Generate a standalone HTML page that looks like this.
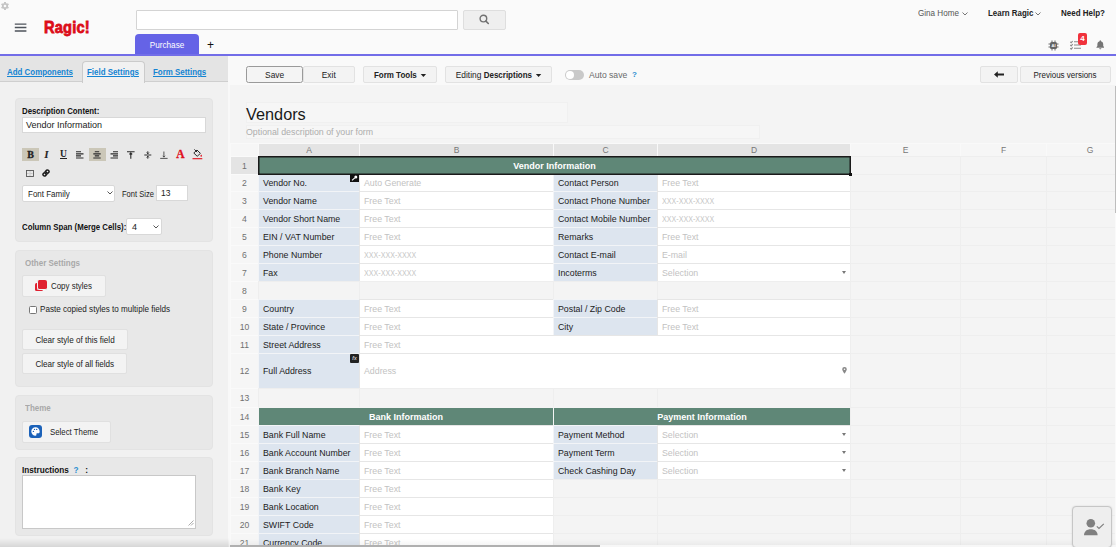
<!DOCTYPE html>
<html><head><meta charset="utf-8"><title>Vendors - Ragic</title>
<style>
*{box-sizing:border-box;margin:0;padding:0}
html,body{width:1116px;height:547px;overflow:hidden;background:#f4f4f4;font-family:"Liberation Sans",sans-serif;font-size:9px;color:#222}
.abs{position:absolute}
#top{position:absolute;left:0;top:0;width:1116px;height:54px;background:#fafafa}
#pline{z-index:5;position:absolute;left:0;top:54px;width:1116px;height:2px;background:#726de8}
#toolbar{position:absolute;left:228px;top:55px;width:888px;height:30px;background:#f9f9f9}
#left{position:absolute;left:0;top:55px;width:229px;height:492px;background:#f1f1f1}
#ltabs{position:absolute;left:0;top:0;width:229px;height:27px;background:#e4e4e4;border-bottom:1px solid #cfcfcf}
.btn b,.btn.bb{font-size:8.900px;font-weight:bold}
.btn{position:absolute;height:17px;top:66px;background:#f3f3f3;border:1px solid #e2e2e2;border-radius:2px;font-size:9.300px;line-height:16px;text-align:center;color:#222;white-space:nowrap}
.card{position:absolute;left:15px;width:198px;background:#e8e8e8;border:1px solid #e3e3e3;border-radius:4px}
.lt{transform:scaleX(.9);transform-origin:0 0;font-size:8.800px;line-height:11px;font-weight:bold;color:#1584d2;text-decoration:underline;white-space:nowrap}
.b{transform:scaleX(.9);transform-origin:0 0;font-weight:bold;font-size:8.700px;line-height:11px;white-space:nowrap;color:#111}
.g{transform:scaleX(.9);transform-origin:0 0;font-weight:bold;font-size:8.900px;line-height:11px;white-space:nowrap;color:#a8a8a8}
.inp{background:#fff;border:1px solid #d8d8d8;font-size:9px;color:#222;white-space:nowrap}
.lbtn{background:#f3f3f3;border:1px solid #e0e0e0;border-radius:2px;font-size:9px;white-space:nowrap}
.ser{font-family:"Liberation Serif",serif;font-size:10px;line-height:12px;color:#222}
.c{position:absolute;border-top:1px solid #ebebeb;border-left:1px solid #ebebeb;font-size:8.800px;white-space:nowrap;overflow:hidden}
.ch{background:#f6f6f6;color:#777;text-align:center;font-size:8.500px;border-color:#f9f9f9}
.ch.sel{background:#e4e4e4}
.rn{background:#f6f6f6;color:#707070;text-align:center;font-size:8.600px;border-color:#fafafa}
.rn.sel{background:#e4e4e4}
.e{background:#f4f4f4;border-color:#eeeeee}
.lb{background:#dde5ef;color:#1c1c1c;padding-left:4px;border-color:#f2f4f7}
.v{background:#fff;color:#c2c2c2;padding-left:4px;border-color:#e6e6e6}
.v.x{color:#c8c8c8}
.xs{display:inline-block;transform:scaleX(.81);transform-origin:0 50%}
.hd{background:#5f8777;color:#fff;font-weight:bold;font-size:9px;text-align:center;border-color:#f4f4f4}
.caret{position:absolute;width:0;height:0;border-left:2.500px solid transparent;border-right:2.500px solid transparent;border-top:3px solid #777}
.dn{display:inline-block;width:0;height:0;border-left:3px solid transparent;border-right:3px solid transparent;border-top:3px solid #222;vertical-align:middle;margin-left:2px}
.sx{transform:scaleX(.9);transform-origin:0 0}
.sc{display:inline-block;transform:scaleX(.9);transform-origin:50% 50%}
</style></head><body>
<div id="top">
<svg class="abs" style="left:0px;top:1px" width="10" height="10" viewBox="0 0 10 10"><circle cx="5" cy="5" r="2.200" fill="none" stroke="#c4c4c4" stroke-width="1.700"/><path stroke="#c4c4c4" stroke-width="1.900" d="M5.00 7.60L5.00 9.00M2.75 6.30L1.54 7.00M2.75 3.70L1.54 3.00M5.00 2.40L5.00 1.00M7.25 3.70L8.46 3.00M7.25 6.30L8.46 7.00"/></svg>
<svg class="abs" style="left:14px;top:22px" width="14" height="11" viewBox="0 0 14 11"><path stroke="#4e535b" stroke-width="1.300" d="M.8 2.100h11.600M.8 5.500h11.600M.8 9h11.600"/></svg>
<div class="abs" id="logo" style="left:44px;top:18px;font-size:16.300px;line-height:18px;font-weight:bold;color:#dc0c18;transform:scaleX(.9);transform-origin:0 0;-webkit-text-stroke:.8px #dc0c18;white-space:nowrap;letter-spacing:.2px">Ragic!</div>
<div class="abs" style="left:136px;top:10px;width:322px;height:20px;background:#fff;border:1px solid #d4d4d4;border-radius:1px"></div>
<div class="abs" style="left:463px;top:10px;width:43px;height:20px;background:#efefef;border:1px solid #dedede;border-radius:2px"></div>
<svg class="abs" style="left:479px;top:14px" width="11" height="11" viewBox="0 0 11 11"><circle cx="4.400" cy="4.600" r="3.300" fill="none" stroke="#727272" stroke-width="1.400"/><path d="M6.900 7.100L9.300 9.500" stroke="#727272" stroke-width="1.600" stroke-linecap="round"/></svg>
<div class="abs" style="left:135px;top:34px;width:64px;height:21px;background:#6563e6;border-radius:4px 4px 0 0;color:#fff;font-size:8.2px;line-height:23px;text-align:center">Purchase</div>
<div class="abs" style="left:207px;top:38px;font-size:12px;line-height:14px;color:#111">+</div>
<div class="abs" style="left:918px;top:8px;transform:scaleX(.9);transform-origin:0 0;font-size:9px;line-height:11px;color:#555;white-space:nowrap">Gina Home</div>
<svg class="abs" style="left:962px;top:12px" width="6" height="4" viewBox="0 0 6 4"><path d="M.5 .5L3 3L5.5 .5" fill="none" stroke="#666" stroke-width=".9"/></svg>
<div class="abs" style="left:988px;top:8px;transform:scaleX(.9);transform-origin:0 0;font-size:8.800px;line-height:11px;color:#222;font-weight:bold;white-space:nowrap">Learn Ragic</div>
<svg class="abs" style="left:1035px;top:12px" width="6" height="4" viewBox="0 0 6 4"><path d="M.5 .5L3 3L5.5 .5" fill="none" stroke="#666" stroke-width=".9"/></svg>
<div class="abs" style="left:1061px;top:8px;transform:scaleX(.9);transform-origin:0 0;font-size:8.900px;line-height:11px;color:#222;font-weight:bold;white-space:nowrap">Need Help?</div>
<svg class="abs" style="left:1048px;top:40px" width="11" height="11" viewBox="0 0 22 22"><rect x="4" y="4" width="14" height="14" rx="3" fill="#666"/><path stroke="#666" stroke-width="2" d="M8 1v3M14 1v3M8 18v3M14 18v3M1 8h3M1 14h3M18 8h3M18 14h3"/><text x="11" y="14.5" font-size="8" font-family="Liberation Sans, sans-serif" font-weight="bold" fill="#fafafa" text-anchor="middle">AI</text></svg>
<svg class="abs" style="left:1070px;top:40px" width="11" height="10" viewBox="0 0 11 10"><path stroke="#888" stroke-width="1.1" fill="none" d="M4 1.8h7M4 5h7M4 8.2h7M.3 1.8l.9.9l1.5-1.7M.3 5l.9.9l1.5-1.7M.3 8.2l.9.9l1.5-1.7"/></svg>
<div class="abs" style="left:1078px;top:33px;width:9px;height:12px;background:#f0323c;border-radius:2px;color:#fff;font-size:8px;line-height:12px;text-align:center;font-weight:bold">4</div>
<svg class="abs" style="left:1095.700px;top:40.400px" width="8.600" height="9.500" viewBox="0 0 10 11"><path fill="#757575" d="M5 0.3c.5 0 .8.3.8.8v.4c1.6.4 2.6 1.700 2.600 3.400v2.100l1.100 1.300v.6h-9v-.6l1.100-1.300v-2.100c0-1.700 1-3 2.600-3.400v-.4c0-.5.3-.8.800-.8zM3.800 9.500h2.400c0 .7-.5 1.200-1.200 1.200s-1.200-.5-1.200-1.200z"/></svg>
</div>
<div id="pline"></div>
<div id="left">
<div id="ltabs"></div>
<div class="abs lt" style="left:7px;top:12px">Add Components</div>
<div class="abs" style="left:82px;top:6px;width:63px;height:22px;background:#f1f1f1;border:1px solid #cbcbcb;border-bottom:none;border-radius:4px 4px 0 0"></div>
<div class="abs lt" style="left:87px;top:12px">Field Settings</div>
<div class="abs lt" style="left:153px;top:12px">Form Settings</div>

<div class="card" style="top:43px;height:144px"></div>
<div class="abs b" style="left:22px;top:51px">Description Content:</div>
<div class="abs inp" style="left:22px;top:62px;width:184px;height:16px;padding-left:3px;line-height:15px">Vendor Information</div>
<div class="abs" style="left:22px;top:93px;width:17px;height:13px;background:#cbc7b8"></div>
<div class="abs" style="left:89px;top:93px;width:17px;height:13px;background:#cbc7b8"></div>
<div id="icons">
<div class="abs ser" style="left:24px;top:94px;width:13px;text-align:center;font-weight:bold;-webkit-text-stroke:.3px #222">B</div>
<div class="abs ser" style="left:40px;top:94px;width:13px;text-align:center;font-weight:bold;font-style:italic;-webkit-text-stroke:.2px #222">I</div>
<div class="abs ser" style="left:57px;top:93px;width:13px;text-align:center;font-size:9.500px;font-weight:bold">U</div>
<div class="abs" style="left:60px;top:102.500px;width:7px;height:1px;background:#222"></div>
<svg class="abs" style="left:76px;top:96px" width="8" height="8" viewBox="0 0 8 8"><path stroke="#2a2a2a" stroke-width="1.150" d="M0 .7h5M0 2.800h7.500M0 4.900h5M0 7h7.500"/></svg>
<svg class="abs" style="left:93px;top:96px" width="8" height="8" viewBox="0 0 8 8"><path stroke="#2a2a2a" stroke-width="1.150" d="M1.800 .7h4.400M.3 2.800h7.400M1.800 4.900h4.400M.3 7h7.400"/></svg>
<svg class="abs" style="left:110px;top:96px" width="8" height="8" viewBox="0 0 8 8"><path stroke="#2a2a2a" stroke-width="1.150" d="M3 .7h5M.5 2.800h7.500M3 4.900h5M.5 7h7.500"/></svg>
<svg class="abs" style="left:127px;top:96px" width="8" height="8" viewBox="0 0 8 8"><path stroke="#2a2a2a" stroke-width="1.100" fill="none" d="M0 .7h7.600M3.800 1.500v6.300M2.400 3.400L3.800 2l1.400 1.400"/></svg>
<svg class="abs" style="left:144px;top:96px" width="8" height="8" viewBox="0 0 8 8"><path stroke="#2e2e2e" stroke-width="1" fill="none" d="M.3 4h7M3.800 .3v2.600M3.800 5.100v2.600M2.700 1.600L3.800 2.800l1.100-1.200M2.700 6.400L3.800 5.200l1.100 1.200"/></svg>
<svg class="abs" style="left:160px;top:96px" width="8" height="8" viewBox="0 0 8 8"><path stroke="#444" stroke-width=".9" fill="none" d="M.2 7.400h7.400M3.900 .5v5.800M2.700 4.800L3.900 6l1.200-1.200"/></svg>
<div class="abs" style="left:174px;top:93px;width:13px;text-align:center;font-weight:bold;font-size:11.500px;line-height:12px;color:#e0101c;font-family:'Liberation Serif',serif;-webkit-text-stroke:.3px #e0101c">A</div>
<svg class="abs" style="left:192px;top:94px" width="11" height="11" viewBox="0 0 11 11"><path fill="none" stroke="#2a2a2a" stroke-width="1" d="M1.800 4L5 1l3.400 3.400l-3.200 2.900z"/><path stroke="#2a2a2a" stroke-width="1" d="M2.400 .4l2.800 2.800"/><path fill="#e0101c" d="M9.200 5.500c.5.700.8 1.100.8 1.500a.8.800 0 0 1-1.600 0c0-.4.300-.8.800-1.500z"/><path stroke="#e0101c" stroke-width="1.100" d="M.5 9.700h9.800"/></svg>
<svg class="abs" style="left:26px;top:115px" width="8" height="7" viewBox="0 0 8 7"><rect x=".5" y=".5" width="7" height="6" fill="none" stroke="#555" stroke-width=".9"/><path stroke="#999" stroke-width=".5" stroke-dasharray=".8 .6" d="M4 1v5M1 3.500h6"/></svg>
<svg class="abs" style="left:42px;top:114px" width="8" height="8" viewBox="0 0 8 8"><path fill="none" stroke="#1a1a1a" stroke-width="1.500" stroke-linecap="round" d="M3.400 4.600a1.600 1.600 0 0 1 0-2.200l1.200-1.200a1.600 1.600 0 0 1 2.200 2.200l-.6.600M4.600 3.400a1.600 1.600 0 0 1 0 2.200l-1.200 1.200a1.600 1.600 0 0 1-2.200-2.200l.6-.6"/></svg>
</div>
<div class="abs inp" style="left:22px;top:130px;width:93px;height:17px;padding-left:5px;line-height:16px;border-radius:2px;font-size:8.900px"><span class="sc" style="transform-origin:0 50%">Font Family</span></div>
<svg class="abs" style="left:107px;top:136px" width="6" height="4" viewBox="0 0 6 4"><path d="M.5 .5L3 3L5.500 .5" fill="none" stroke="#444" stroke-width=".9"/></svg>
<div class="abs sx" style="left:122px;top:134px;line-height:11px;font-size:8.400px;white-space:nowrap">Font Size</div>
<div class="abs inp" style="left:156px;top:130px;width:32px;height:16px;padding-left:4px;line-height:15px;font-size:8.500px">13</div>
<div class="abs b" style="left:22px;top:167px">Column Span (Merge Cells):</div>
<div class="abs inp" style="left:126px;top:163px;width:36px;height:17px;padding-left:5px;line-height:16px;border-radius:2px">4</div>
<svg class="abs" style="left:153px;top:170px" width="6" height="4" viewBox="0 0 6 4"><path d="M.5 .5L3 3L5.500 .5" fill="none" stroke="#444" stroke-width=".9"/></svg>

<div class="card" style="top:195px;height:137px"></div>
<div class="abs g" style="left:25px;top:203px">Other Settings</div>
<div class="abs lbtn" style="left:22px;top:220px;width:84px;height:22px"></div>
<div class="abs" style="left:35px;top:228px;width:8px;height:8px;background:#e02030;border-radius:1.500px"></div>
<div class="abs" style="left:37px;top:225px;width:10px;height:10px;background:#e02030;border-radius:2px;border-left:1px solid #f3f3f3;border-bottom:1px solid #f3f3f3"></div>
<div class="abs sx" style="left:51px;top:226px;line-height:11px;font-size:8.800px;white-space:nowrap">Copy styles</div>
<div class="abs" style="left:29px;top:251px;width:8px;height:8px;background:#fff;border:1px solid #767676;border-radius:1.500px"></div>
<div class="abs sx" style="left:40px;top:249px;line-height:11px;white-space:nowrap;font-size:9px">Paste copied styles to multiple fields</div>
<div class="abs lbtn" style="left:22px;top:274px;width:106px;height:21px;line-height:20px;text-align:center"><span class="sc">Clear style of this field</span></div>
<div class="abs lbtn" style="left:22px;top:298px;width:105px;height:21px;line-height:20px;text-align:center"><span class="sc">Clear style of all fields</span></div>

<div class="card" style="top:340px;height:55px"></div>
<div class="abs g" style="left:25px;top:348px">Theme</div>
<div class="abs lbtn" style="left:22px;top:366px;width:89px;height:22px"></div>
<div class="abs" style="left:29px;top:370px;width:13px;height:13px;background:#1c62b9;border-radius:3px"></div>
<svg class="abs" style="left:31px;top:372px" width="9" height="9" viewBox="0 0 9 9"><path fill="#fff" d="M4.500 .3a4.200 4.200 0 1 0 0 8.400c.8 0 1.100-.5 .9-1.100c-.3-.8.2-1.400 1-1.400h1c.8 0 1.300-.6 1.300-1.500c0-2.500-1.900-4.400-4.200-4.400z"/><circle cx="2.400" cy="4.400" r=".7" fill="#1c62b9"/><circle cx="3.500" cy="2.400" r=".7" fill="#1c62b9"/><circle cx="5.700" cy="2.400" r=".7" fill="#1c62b9"/></svg>
<div class="abs sx" style="left:50px;top:372px;line-height:11px;font-size:8.700px;white-space:nowrap">Select Theme</div>

<div class="card" style="top:402px;height:79px"></div>
<div class="abs b" style="left:22px;top:410px;font-size:9.100px">Instructions&nbsp; <span style="color:#2b8fd0;font-weight:bold">?</span>&nbsp;&nbsp; :</div>
<div class="abs" style="left:22px;top:420px;width:174px;height:54px;background:#fff;border:1px solid #c8c8c8"></div>
<svg class="abs" style="left:188px;top:465px" width="6" height="6" viewBox="0 0 6 6"><path d="M5.500 .5L.5 5.500M5.500 3L3 5.500" stroke="#888" stroke-width=".7"/></svg>
</div>
<div id="toolbar"></div>
<div class="btn" style="left:246px;width:57px;background:#f4f4f4;border-color:#9a9a9a;border-radius:2.500px"><span class="sc">Save</span></div>
<div class="btn" style="left:303px;width:52px"><span class="sc">Exit</span></div>
<div class="btn bb" style="left:363px;width:74px"><span class="sc">Form Tools <span class="dn"></span></span></div>
<div class="btn" style="left:445px;width:107px"><span class="sc">Editing <b>Descriptions</b> <span class="dn"></span></span></div>
<div class="abs" style="left:565px;top:70px;width:19px;height:10px;border-radius:5px;background:#c9c9c9"></div>
<div class="abs" style="left:566px;top:71px;width:8px;height:8px;border-radius:4px;background:#fff"></div>
<div class="abs" style="left:589px;top:69px;font-size:8.600px;line-height:12px;color:#6a6a6a;white-space:nowrap">Auto save</div>
<div class="abs" style="left:632px;top:69px;font-size:8px;line-height:12px;color:#2b8fd0;font-weight:bold">?</div>
<div class="btn" style="left:980px;width:38px"></div>
<svg class="abs" style="left:994px;top:71px" width="10" height="7" viewBox="0 0 10 7"><path fill="#222" d="M0 3.500L3.800 .3v2.200h6.200v2h-6.200v2.200z"/></svg>
<div class="btn" style="left:1020px;width:91px;font-size:8.900px"><span class="sc">Previous versions</span></div>
<div id="grid">
<div class="abs" style="left:228px;top:85px;width:888px;height:462px;background:#f4f4f4"></div>
<div class="abs" style="left:228px;top:85px;width:2px;height:462px;background:#f8f8f8"></div>
<div class="abs" style="left:246px;top:102px;width:322px;height:21px;border:1px solid #f0f0f0;background:#f6f6f6"></div>
<div class="abs" style="left:246px;top:125px;width:514px;height:14px;border:1px solid #f0f0f0;background:#f6f6f6"></div>
<div class="abs" style="left:246px;top:104px;font-size:16.300px;line-height:20px;color:#1a1a1a;white-space:nowrap">Vendors</div>
<div class="abs" style="left:246px;top:126px;font-size:8.800px;line-height:12px;color:#adadad;white-space:nowrap">Optional description of your form</div>
<div class="c ch sel" style="left:258px;top:143px;width:101px;height:13px;line-height:13px">A</div>
<div class="c ch sel" style="left:359px;top:143px;width:194px;height:13px;line-height:13px">B</div>
<div class="c ch sel" style="left:553px;top:143px;width:104px;height:13px;line-height:13px">C</div>
<div class="c ch sel" style="left:657px;top:143px;width:193px;height:13px;line-height:13px">D</div>
<div class="c ch" style="left:850px;top:143px;width:110px;height:13px;line-height:13px">E</div>
<div class="c ch" style="left:960px;top:143px;width:86px;height:13px;line-height:13px">F</div>
<div class="c ch" style="left:1046px;top:143px;width:87px;height:13px;line-height:13px">G</div>
<div class="c ch" style="left:230px;top:143px;width:28px;height:13px;line-height:13px"></div>
<div class="c rn sel" style="left:230px;top:156px;width:28px;height:18px;line-height:18px">1</div>
<div class="c e" style="left:850px;top:156px;width:110px;height:18px;line-height:18px"></div>
<div class="c e" style="left:960px;top:156px;width:86px;height:18px;line-height:18px"></div>
<div class="c e" style="left:1046px;top:156px;width:87px;height:18px;line-height:18px"></div>
<div class="c rn" style="left:230px;top:174px;width:28px;height:17px;line-height:17px">2</div>
<div class="c e" style="left:850px;top:174px;width:110px;height:17px;line-height:17px"></div>
<div class="c e" style="left:960px;top:174px;width:86px;height:17px;line-height:17px"></div>
<div class="c e" style="left:1046px;top:174px;width:87px;height:17px;line-height:17px"></div>
<div class="c lb" style="left:258px;top:174px;width:101px;height:17px;line-height:17px">Vendor No.</div>
<div class="c v" style="left:359px;top:174px;width:194px;height:17px;line-height:17px">Auto Generate</div>
<div class="c lb" style="left:553px;top:174px;width:104px;height:17px;line-height:17px">Contact Person</div>
<div class="c v" style="left:657px;top:174px;width:193px;height:17px;line-height:17px">Free Text</div>
<div class="c rn" style="left:230px;top:191px;width:28px;height:18px;line-height:18px">3</div>
<div class="c e" style="left:850px;top:191px;width:110px;height:18px;line-height:18px"></div>
<div class="c e" style="left:960px;top:191px;width:86px;height:18px;line-height:18px"></div>
<div class="c e" style="left:1046px;top:191px;width:87px;height:18px;line-height:18px"></div>
<div class="c lb" style="left:258px;top:191px;width:101px;height:18px;line-height:18px">Vendor Name</div>
<div class="c v" style="left:359px;top:191px;width:194px;height:18px;line-height:18px">Free Text</div>
<div class="c lb" style="left:553px;top:191px;width:104px;height:18px;line-height:18px">Contact Phone Number</div>
<div class="c v x" style="left:657px;top:191px;width:193px;height:18px;line-height:18px"><span class="xs">XXX-XXX-XXXX</span></div>
<div class="c rn" style="left:230px;top:209px;width:28px;height:18px;line-height:18px">4</div>
<div class="c e" style="left:850px;top:209px;width:110px;height:18px;line-height:18px"></div>
<div class="c e" style="left:960px;top:209px;width:86px;height:18px;line-height:18px"></div>
<div class="c e" style="left:1046px;top:209px;width:87px;height:18px;line-height:18px"></div>
<div class="c lb" style="left:258px;top:209px;width:101px;height:18px;line-height:18px">Vendor Short Name</div>
<div class="c v" style="left:359px;top:209px;width:194px;height:18px;line-height:18px">Free Text</div>
<div class="c lb" style="left:553px;top:209px;width:104px;height:18px;line-height:18px">Contact Mobile Number</div>
<div class="c v x" style="left:657px;top:209px;width:193px;height:18px;line-height:18px"><span class="xs">XXX-XXX-XXXX</span></div>
<div class="c rn" style="left:230px;top:227px;width:28px;height:18px;line-height:18px">5</div>
<div class="c e" style="left:850px;top:227px;width:110px;height:18px;line-height:18px"></div>
<div class="c e" style="left:960px;top:227px;width:86px;height:18px;line-height:18px"></div>
<div class="c e" style="left:1046px;top:227px;width:87px;height:18px;line-height:18px"></div>
<div class="c lb" style="left:258px;top:227px;width:101px;height:18px;line-height:18px">EIN / VAT Number</div>
<div class="c v" style="left:359px;top:227px;width:194px;height:18px;line-height:18px">Free Text</div>
<div class="c lb" style="left:553px;top:227px;width:104px;height:18px;line-height:18px">Remarks</div>
<div class="c v" style="left:657px;top:227px;width:193px;height:18px;line-height:18px">Free Text</div>
<div class="c rn" style="left:230px;top:245px;width:28px;height:18px;line-height:18px">6</div>
<div class="c e" style="left:850px;top:245px;width:110px;height:18px;line-height:18px"></div>
<div class="c e" style="left:960px;top:245px;width:86px;height:18px;line-height:18px"></div>
<div class="c e" style="left:1046px;top:245px;width:87px;height:18px;line-height:18px"></div>
<div class="c lb" style="left:258px;top:245px;width:101px;height:18px;line-height:18px">Phone Number</div>
<div class="c v x" style="left:359px;top:245px;width:194px;height:18px;line-height:18px"><span class="xs">XXX-XXX-XXXX</span></div>
<div class="c lb" style="left:553px;top:245px;width:104px;height:18px;line-height:18px">Contact E-mail</div>
<div class="c v" style="left:657px;top:245px;width:193px;height:18px;line-height:18px">E-mail</div>
<div class="c rn" style="left:230px;top:263px;width:28px;height:18px;line-height:18px">7</div>
<div class="c e" style="left:850px;top:263px;width:110px;height:18px;line-height:18px"></div>
<div class="c e" style="left:960px;top:263px;width:86px;height:18px;line-height:18px"></div>
<div class="c e" style="left:1046px;top:263px;width:87px;height:18px;line-height:18px"></div>
<div class="c lb" style="left:258px;top:263px;width:101px;height:18px;line-height:18px">Fax</div>
<div class="c v x" style="left:359px;top:263px;width:194px;height:18px;line-height:18px"><span class="xs">XXX-XXX-XXXX</span></div>
<div class="c lb" style="left:553px;top:263px;width:104px;height:18px;line-height:18px">Incoterms</div>
<div class="c v" style="left:657px;top:263px;width:193px;height:18px;line-height:18px">Selection</div>
<div class="caret" style="left:842px;top:271px"></div>
<div class="c rn" style="left:230px;top:281px;width:28px;height:18px;line-height:18px">8</div>
<div class="c e" style="left:850px;top:281px;width:110px;height:18px;line-height:18px"></div>
<div class="c e" style="left:960px;top:281px;width:86px;height:18px;line-height:18px"></div>
<div class="c e" style="left:1046px;top:281px;width:87px;height:18px;line-height:18px"></div>
<div class="c e" style="left:258px;top:281px;width:101px;height:18px;line-height:18px"></div>
<div class="c e" style="left:359px;top:281px;width:194px;height:18px;line-height:18px"></div>
<div class="c e" style="left:553px;top:281px;width:104px;height:18px;line-height:18px"></div>
<div class="c e" style="left:657px;top:281px;width:193px;height:18px;line-height:18px"></div>
<div class="c rn" style="left:230px;top:299px;width:28px;height:18px;line-height:18px">9</div>
<div class="c e" style="left:850px;top:299px;width:110px;height:18px;line-height:18px"></div>
<div class="c e" style="left:960px;top:299px;width:86px;height:18px;line-height:18px"></div>
<div class="c e" style="left:1046px;top:299px;width:87px;height:18px;line-height:18px"></div>
<div class="c lb" style="left:258px;top:299px;width:101px;height:18px;line-height:18px">Country</div>
<div class="c v" style="left:359px;top:299px;width:194px;height:18px;line-height:18px">Free Text</div>
<div class="c lb" style="left:553px;top:299px;width:104px;height:18px;line-height:18px">Postal / Zip Code</div>
<div class="c v" style="left:657px;top:299px;width:193px;height:18px;line-height:18px">Free Text</div>
<div class="c rn" style="left:230px;top:317px;width:28px;height:18px;line-height:18px">10</div>
<div class="c e" style="left:850px;top:317px;width:110px;height:18px;line-height:18px"></div>
<div class="c e" style="left:960px;top:317px;width:86px;height:18px;line-height:18px"></div>
<div class="c e" style="left:1046px;top:317px;width:87px;height:18px;line-height:18px"></div>
<div class="c lb" style="left:258px;top:317px;width:101px;height:18px;line-height:18px">State / Province</div>
<div class="c v" style="left:359px;top:317px;width:194px;height:18px;line-height:18px">Free Text</div>
<div class="c lb" style="left:553px;top:317px;width:104px;height:18px;line-height:18px">City</div>
<div class="c v" style="left:657px;top:317px;width:193px;height:18px;line-height:18px">Free Text</div>
<div class="c rn" style="left:230px;top:335px;width:28px;height:18px;line-height:18px">11</div>
<div class="c e" style="left:850px;top:335px;width:110px;height:18px;line-height:18px"></div>
<div class="c e" style="left:960px;top:335px;width:86px;height:18px;line-height:18px"></div>
<div class="c e" style="left:1046px;top:335px;width:87px;height:18px;line-height:18px"></div>
<div class="c lb" style="left:258px;top:335px;width:101px;height:18px;line-height:18px">Street Address</div>
<div class="c v" style="left:359px;top:335px;width:491px;height:18px;line-height:18px">Free Text</div>
<div class="c rn" style="left:230px;top:353px;width:28px;height:35px;line-height:35px">12</div>
<div class="c e" style="left:850px;top:353px;width:110px;height:35px;line-height:35px"></div>
<div class="c e" style="left:960px;top:353px;width:86px;height:35px;line-height:35px"></div>
<div class="c e" style="left:1046px;top:353px;width:87px;height:35px;line-height:35px"></div>
<div class="c lb" style="left:258px;top:353px;width:101px;height:35px;line-height:35px">Full Address</div>
<div class="c v" style="left:359px;top:353px;width:491px;height:35px;line-height:35px">Address</div>
<div class="c rn" style="left:230px;top:388px;width:28px;height:19px;line-height:19px">13</div>
<div class="c e" style="left:850px;top:388px;width:110px;height:19px;line-height:19px"></div>
<div class="c e" style="left:960px;top:388px;width:86px;height:19px;line-height:19px"></div>
<div class="c e" style="left:1046px;top:388px;width:87px;height:19px;line-height:19px"></div>
<div class="c e" style="left:258px;top:388px;width:101px;height:19px;line-height:19px"></div>
<div class="c e" style="left:359px;top:388px;width:194px;height:19px;line-height:19px"></div>
<div class="c e" style="left:553px;top:388px;width:104px;height:19px;line-height:19px"></div>
<div class="c e" style="left:657px;top:388px;width:193px;height:19px;line-height:19px"></div>
<div class="c rn" style="left:230px;top:407px;width:28px;height:18px;line-height:18px">14</div>
<div class="c e" style="left:850px;top:407px;width:110px;height:18px;line-height:18px"></div>
<div class="c e" style="left:960px;top:407px;width:86px;height:18px;line-height:18px"></div>
<div class="c e" style="left:1046px;top:407px;width:87px;height:18px;line-height:18px"></div>
<div class="c hd" style="left:258px;top:407px;width:295px;height:18px;line-height:18px">Bank Information</div>
<div class="c hd" style="left:553px;top:407px;width:297px;height:18px;line-height:18px">Payment Information</div>
<div class="c rn" style="left:230px;top:425px;width:28px;height:18px;line-height:18px">15</div>
<div class="c e" style="left:850px;top:425px;width:110px;height:18px;line-height:18px"></div>
<div class="c e" style="left:960px;top:425px;width:86px;height:18px;line-height:18px"></div>
<div class="c e" style="left:1046px;top:425px;width:87px;height:18px;line-height:18px"></div>
<div class="c lb" style="left:258px;top:425px;width:101px;height:18px;line-height:18px">Bank Full Name</div>
<div class="c v" style="left:359px;top:425px;width:194px;height:18px;line-height:18px">Free Text</div>
<div class="c lb" style="left:553px;top:425px;width:104px;height:18px;line-height:18px">Payment Method</div>
<div class="c v" style="left:657px;top:425px;width:193px;height:18px;line-height:18px">Selection</div>
<div class="caret" style="left:842px;top:433px"></div>
<div class="c rn" style="left:230px;top:443px;width:28px;height:18px;line-height:18px">16</div>
<div class="c e" style="left:850px;top:443px;width:110px;height:18px;line-height:18px"></div>
<div class="c e" style="left:960px;top:443px;width:86px;height:18px;line-height:18px"></div>
<div class="c e" style="left:1046px;top:443px;width:87px;height:18px;line-height:18px"></div>
<div class="c lb" style="left:258px;top:443px;width:101px;height:18px;line-height:18px">Bank Account Number</div>
<div class="c v" style="left:359px;top:443px;width:194px;height:18px;line-height:18px">Free Text</div>
<div class="c lb" style="left:553px;top:443px;width:104px;height:18px;line-height:18px">Payment Term</div>
<div class="c v" style="left:657px;top:443px;width:193px;height:18px;line-height:18px">Selection</div>
<div class="caret" style="left:842px;top:451px"></div>
<div class="c rn" style="left:230px;top:461px;width:28px;height:18px;line-height:18px">17</div>
<div class="c e" style="left:850px;top:461px;width:110px;height:18px;line-height:18px"></div>
<div class="c e" style="left:960px;top:461px;width:86px;height:18px;line-height:18px"></div>
<div class="c e" style="left:1046px;top:461px;width:87px;height:18px;line-height:18px"></div>
<div class="c lb" style="left:258px;top:461px;width:101px;height:18px;line-height:18px">Bank Branch Name</div>
<div class="c v" style="left:359px;top:461px;width:194px;height:18px;line-height:18px">Free Text</div>
<div class="c lb" style="left:553px;top:461px;width:104px;height:18px;line-height:18px">Check Cashing Day</div>
<div class="c v" style="left:657px;top:461px;width:193px;height:18px;line-height:18px">Selection</div>
<div class="caret" style="left:842px;top:469px"></div>
<div class="c rn" style="left:230px;top:479px;width:28px;height:18px;line-height:18px">18</div>
<div class="c e" style="left:850px;top:479px;width:110px;height:18px;line-height:18px"></div>
<div class="c e" style="left:960px;top:479px;width:86px;height:18px;line-height:18px"></div>
<div class="c e" style="left:1046px;top:479px;width:87px;height:18px;line-height:18px"></div>
<div class="c lb" style="left:258px;top:479px;width:101px;height:18px;line-height:18px">Bank Key</div>
<div class="c v" style="left:359px;top:479px;width:194px;height:18px;line-height:18px">Free Text</div>
<div class="c e" style="left:553px;top:479px;width:104px;height:18px;line-height:18px"></div>
<div class="c e" style="left:657px;top:479px;width:193px;height:18px;line-height:18px"></div>
<div class="c rn" style="left:230px;top:497px;width:28px;height:18px;line-height:18px">19</div>
<div class="c e" style="left:850px;top:497px;width:110px;height:18px;line-height:18px"></div>
<div class="c e" style="left:960px;top:497px;width:86px;height:18px;line-height:18px"></div>
<div class="c e" style="left:1046px;top:497px;width:87px;height:18px;line-height:18px"></div>
<div class="c lb" style="left:258px;top:497px;width:101px;height:18px;line-height:18px">Bank Location</div>
<div class="c v" style="left:359px;top:497px;width:194px;height:18px;line-height:18px">Free Text</div>
<div class="c e" style="left:553px;top:497px;width:104px;height:18px;line-height:18px"></div>
<div class="c e" style="left:657px;top:497px;width:193px;height:18px;line-height:18px"></div>
<div class="c rn" style="left:230px;top:515px;width:28px;height:18px;line-height:18px">20</div>
<div class="c e" style="left:850px;top:515px;width:110px;height:18px;line-height:18px"></div>
<div class="c e" style="left:960px;top:515px;width:86px;height:18px;line-height:18px"></div>
<div class="c e" style="left:1046px;top:515px;width:87px;height:18px;line-height:18px"></div>
<div class="c lb" style="left:258px;top:515px;width:101px;height:18px;line-height:18px">SWIFT Code</div>
<div class="c v" style="left:359px;top:515px;width:194px;height:18px;line-height:18px">Free Text</div>
<div class="c e" style="left:553px;top:515px;width:104px;height:18px;line-height:18px"></div>
<div class="c e" style="left:657px;top:515px;width:193px;height:18px;line-height:18px"></div>
<div class="c rn" style="left:230px;top:533px;width:28px;height:18px;line-height:18px">21</div>
<div class="c e" style="left:850px;top:533px;width:110px;height:18px;line-height:18px"></div>
<div class="c e" style="left:960px;top:533px;width:86px;height:18px;line-height:18px"></div>
<div class="c e" style="left:1046px;top:533px;width:87px;height:18px;line-height:18px"></div>
<div class="c lb" style="left:258px;top:533px;width:101px;height:18px;line-height:18px">Currency Code</div>
<div class="c v" style="left:359px;top:533px;width:194px;height:18px;line-height:18px">Free Text</div>
<div class="c e" style="left:553px;top:533px;width:104px;height:18px;line-height:18px"></div>
<div class="c e" style="left:657px;top:533px;width:193px;height:18px;line-height:18px"></div>
<div class="c hd" style="left:258px;top:156px;width:593px;height:19px;line-height:18px;border:1px solid #1a1a1a;box-shadow:inset 0 0 0 .5px #1a1a1a">Vendor Information</div>
<div class="abs" style="left:849px;top:173px;width:3px;height:3px;background:#111"></div>
<div class="abs" style="left:350px;top:174px;width:9px;height:8px;background:#111"></div>
<svg class="abs" style="left:351px;top:175px" width="7" height="6" viewBox="0 0 7 6"><circle cx="4.800" cy="1.900" r="1.500" fill="#fff"/><path d="M3.800 2.800L1 5.400" stroke="#fff" stroke-width="1.100"/></svg>
<div class="abs" style="left:350px;top:354px;width:9px;height:9px;background:#222;border-radius:1px;color:#fff;font-size:5.5px;line-height:9px;text-align:center;font-style:italic">fx</div>
<svg class="abs" style="left:842px;top:367px" width="5" height="7" viewBox="0 0 5 7"><path fill="#888" d="M2.500 0a2.300 2.300 0 0 1 2.300 2.300c0 1.500-2.300 4.500-2.300 4.500s-2.300-3-2.300-4.500a2.300 2.300 0 0 1 2.300-2.300z"/><circle cx="2.500" cy="2.300" r=".8" fill="#fff"/></svg>
<div class="abs" style="left:1115px;top:86px;width:1px;height:461px;background:#fafafa"></div>
<div class="abs" style="left:1115px;top:86px;width:1px;height:127px;background:#bdbdbd"></div>
<div class="abs" style="left:0;top:538px;width:229px;height:9px;background:linear-gradient(to bottom,rgba(0,0,0,0),rgba(0,0,0,.11))"></div>
<div class="abs" style="left:229px;top:539px;width:887px;height:8px;background:linear-gradient(to bottom,rgba(0,0,0,0),rgba(0,0,0,.05))"></div>
<div class="abs" style="left:600px;top:545px;width:516px;height:2px;background:#f7f7f7"></div>
<div class="abs" style="left:230px;top:545px;width:370px;height:2px;background:#b0b0b0"></div>
<div class="abs" style="left:1072px;top:506px;width:40px;height:42px;background:#eeeeee;border:1px solid #c6c6c6;border-radius:4px;box-shadow:0 0 2px rgba(0,0,0,.12)"></div>
<svg class="abs" style="left:1084px;top:518px" width="21" height="18" viewBox="0 0 21 18"><circle cx="6.800" cy="5.200" r="4.300" fill="#808080"/><path fill="#808080" d="M0 17.200c0-3.900 2.900-6 6.800-6s6.800 2.100 6.800 6z"/><path fill="none" stroke="#808080" stroke-width="1.200" d="M12.800 8.300l2.200 2.200l4.800-4.600"/></svg>
</div>
</body></html>
